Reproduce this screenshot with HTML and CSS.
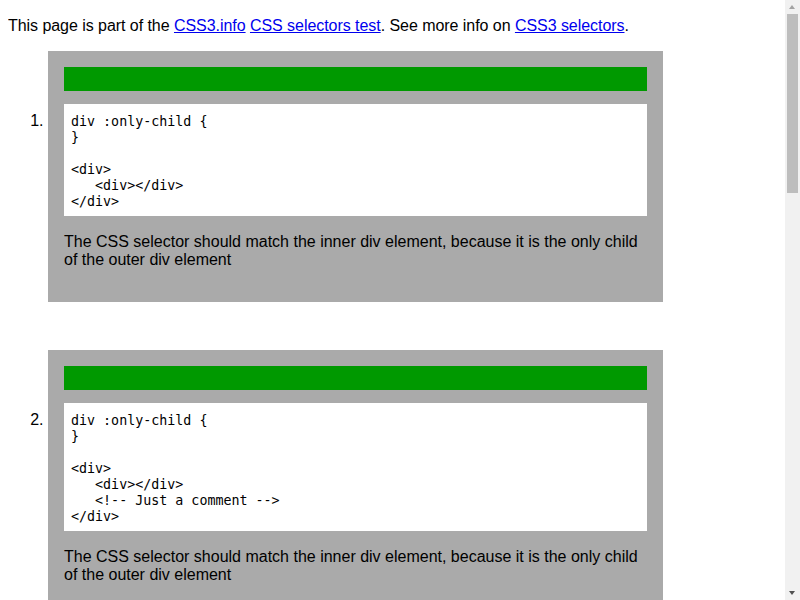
FILE: index.html
```html
<!DOCTYPE html>
<html>
<head>
<meta charset="utf-8">
<title>CSS3.info selectors test: :only-child</title>
<link rel="stylesheet" href="styles.css">
</head>
<body>
<p class="intro">This page is part of the <a href="#">CSS3.info</a> <a href="#">CSS selectors test</a>. See more info on <a href="#">CSS3 selectors</a>.</p>
<ol class="tests">
<li class="test">
<div class="result"></div>
<pre class="code">div :only-child {
}

&lt;div&gt;
   &lt;div&gt;&lt;/div&gt;
&lt;/div&gt;</pre>
<p class="desc">The CSS selector should match the inner div element, because it is the only child of the outer div element</p>
</li>
<li class="test">
<div class="result"></div>
<pre class="code">div :only-child {
}

&lt;div&gt;
   &lt;div&gt;&lt;/div&gt;
   &lt;!-- Just a comment --&gt;
&lt;/div&gt;</pre>
<p class="desc">The CSS selector should match the inner div element, because it is the only child of the outer div element</p>
</li>
<li class="test">
<div class="result"></div>
<pre class="code">div :only-child {
}

&lt;div&gt;
   &lt;div&gt;&lt;/div&gt;
   How about regular text...
&lt;/div&gt;</pre>
<p class="desc">The CSS selector should match the inner div element, because it is the only child of the outer div element</p>
</li>
<li class="test">
<div class="result"></div>
<pre class="code">div :only-child {
}

&lt;div&gt;
   &lt;div&gt;&lt;/div&gt;
   &lt;div&gt;&lt;/div&gt;
&lt;/div&gt;</pre>
<p class="desc">The CSS selector should not match the inner div elements, because they are not the only child of the outer div element</p>
</li>
<li class="test">
<div class="result"></div>
<pre class="code">div :only-child {
}

&lt;div&gt;
   &lt;div&gt;&lt;/div&gt;
&lt;/div&gt;</pre>
<p class="desc">The CSS selector should match the inner div element, because it is the only child of the outer div element, even after it has been added dynamically</p>
</li>
<li class="test">
<div class="result"></div>
<pre class="code">div :only-child {
}

&lt;div&gt;
   &lt;div&gt;&lt;/div&gt;
   &lt;div&gt;&lt;/div&gt;
&lt;/div&gt;</pre>
<p class="desc">The CSS selector should not match the inner div element, because it is no longer the only child after another element has been added dynamically</p>
</li>
</ol>
<div class="scrollbar" aria-hidden="true">
  <span class="sb-up"></span>
  <span class="sb-thumb"></span>
  <span class="sb-down"></span>
</div>
</body>
</html>
```

FILE: styles.css
```css
html {
  background: #fff;
}
body {
  margin: 8px;
  font-family: "Liberation Sans", Arial, sans-serif;
  font-size: 16px;
  color: #000;
}
.intro {
  margin: 9px 0 0;
  letter-spacing: -0.05px;
}
.intro a {
  color: #00e;
  text-decoration: underline;
}
.tests {
  margin: 16px 0 0;
  padding-left: 40px;
}
.test {
  width: 583px;
  padding: 16px 16px 17px;
  margin-bottom: 48px;
  background: #aaa;
}
.result {
  height: 24px;
  background: #090;
}
.code {
  margin: 13px 0;
  padding: 10px 7px 6px;
  background: #fff;
  font-family: "DejaVu Sans Mono", "Liberation Mono", monospace;
  font-size: 13.33px;
  line-height: 16px;
}
.desc {
  margin: 17px 0 16px;
}

/* decorative browser scrollbar overlay */
.scrollbar {
  position: fixed;
  top: 0;
  right: 0;
  width: 15px;
  height: 100%;
  background: #f1f1f1;
}
.sb-up {
  position: absolute;
  top: 5px;
  left: 4px;
  width: 0;
  height: 0;
  border-left: 3.5px solid transparent;
  border-right: 3.5px solid transparent;
  border-bottom: 4px solid #a3a3a3;
}
.sb-thumb {
  position: absolute;
  top: 14px;
  left: 2px;
  width: 11px;
  height: 179px;
  background: #bdbdbd;
}
.sb-down {
  position: absolute;
  bottom: 5px;
  left: 4px;
  width: 0;
  height: 0;
  border-left: 3.5px solid transparent;
  border-right: 3.5px solid transparent;
  border-top: 4px solid #505050;
}
```
